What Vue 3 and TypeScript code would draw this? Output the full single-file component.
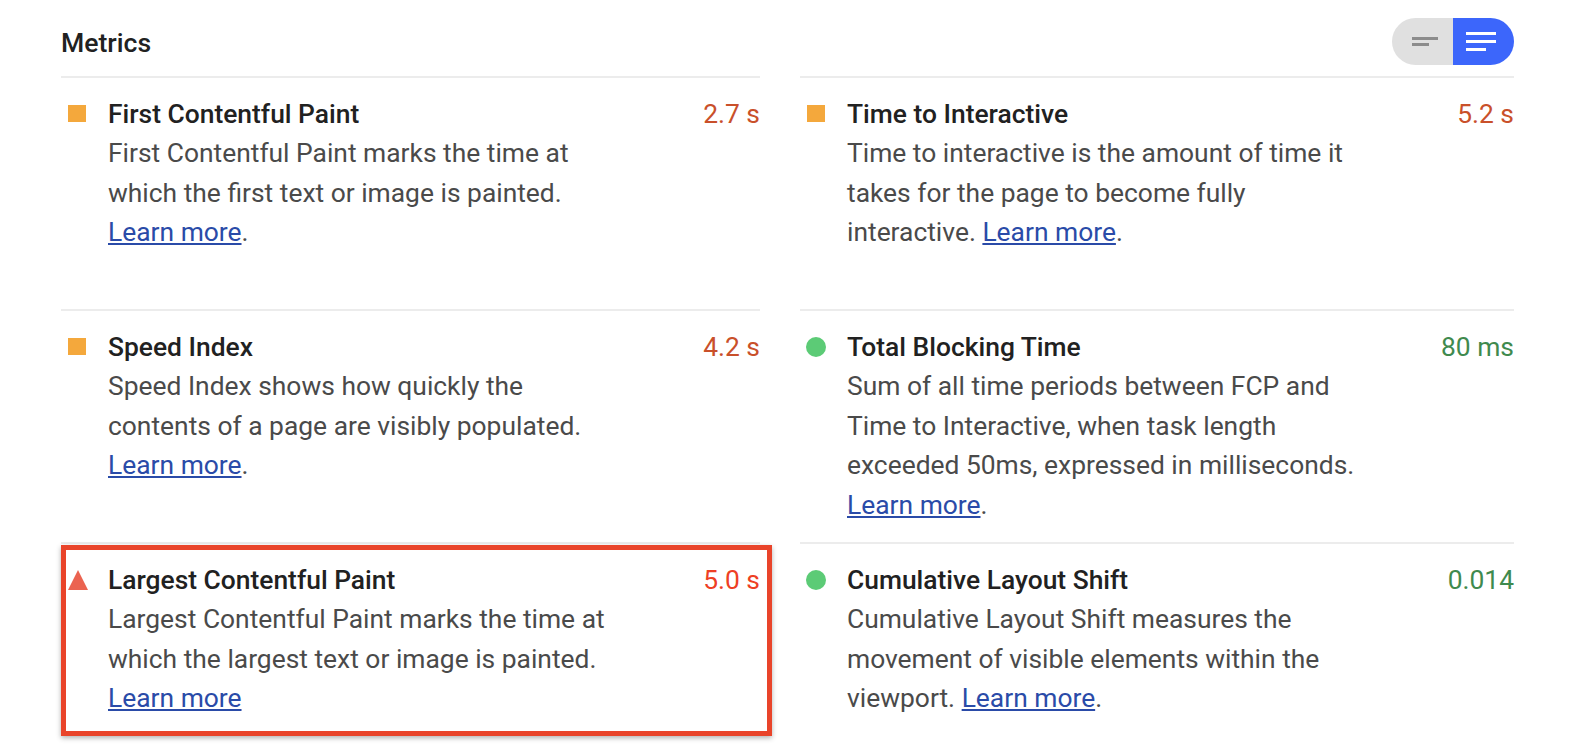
<script setup lang="ts">
interface Metric {
  title: string;
  value: string;
  rating: "average" | "pass" | "fail";
  before: string;
  after: string;
  highlight?: boolean;
}

const metrics: Metric[] = [
  {
    title: "First Contentful Paint",
    value: "2.7 s",
    rating: "average",
    before: "First Contentful Paint marks the time at which the first text or image is painted.",
    after: ".",
  },
  {
    title: "Time to Interactive",
    value: "5.2 s",
    rating: "average",
    before: "Time to interactive is the amount of time it takes for the page to become fully interactive.",
    after: ".",
  },
  {
    title: "Speed Index",
    value: "4.2 s",
    rating: "average",
    before: "Speed Index shows how quickly the contents of a page are visibly populated.",
    after: ".",
  },
  {
    title: "Total Blocking Time",
    value: "80 ms",
    rating: "pass",
    before: "Sum of all time periods between FCP and Time to Interactive, when task length exceeded 50ms, expressed in milliseconds.",
    after: ".",
  },
  {
    title: "Largest Contentful Paint",
    value: "5.0 s",
    rating: "fail",
    before: "Largest Contentful Paint marks the time at which the largest text or image is painted.",
    after: "",
    highlight: true,
  },
  {
    title: "Cumulative Layout Shift",
    value: "0.014",
    rating: "pass",
    before: "Cumulative Layout Shift measures the movement of visible elements within the viewport.",
    after: ".",
  },
];
</script>

<template>
  <div class="page">
    <header class="header">
      <h2 class="heading">Metrics</h2>
      <div class="toggle">
        <span class="toggle-side off">
          <i class="bar off-long"></i>
          <i class="bar off-short"></i>
        </span>
        <span class="toggle-side on">
          <i class="bar on-long"></i>
          <i class="bar on-long"></i>
          <i class="bar on-short"></i>
        </span>
      </div>
    </header>

    <div class="grid">
      <section v-for="m in metrics" :key="m.title" class="metric">
        <span class="icon" :class="m.rating"></span>
        <div class="body">
          <div class="top">
            <span class="title">{{ m.title }}</span>
            <span class="value" :class="m.rating">{{ m.value }}</span>
          </div>
          <p class="desc">{{ m.before }} <a class="link" href="#">Learn more</a>{{ m.after }}</p>
        </div>
        <div v-if="m.highlight" class="highlight"></div>
      </section>
    </div>
  </div>
</template>

<style>
html,
body {
  background: #fff;
}
</style>

<style scoped>
.page {
  width: 1578px;
  height: 754px;
  box-sizing: border-box;
  padding: 18px 64px 0 61px;
  overflow: hidden;
  font-family: Roboto, "Liberation Sans", sans-serif;
}

.header {
  display: flex;
  align-items: center;
  justify-content: space-between;
  height: 47px;
  margin-bottom: 11px;
}

.heading {
  margin: 0;
  font-size: 26.6px;
  font-weight: 500;
  color: #212121;
  position: relative;
  top: 1px;
}

.toggle {
  display: flex;
  width: 122px;
  height: 47px;
  border-radius: 24px;
  overflow: hidden;
}

.toggle-side {
  flex: none;
  width: 61px;
  display: flex;
  flex-direction: column;
  justify-content: center;
  box-sizing: border-box;
}

.toggle-side.off {
  background: #e0e0e0;
  padding-left: 20px;
  gap: 3px;
}

.toggle-side.on {
  background: #3c66fb;
  padding-left: 13px;
  gap: 5px;
}

.bar {
  display: block;
  height: 3px;
}

.off-long {
  width: 26px;
  background: #8c8c8c;
}

.off-short {
  width: 17px;
  background: #8c8c8c;
}

.on-long {
  width: 30px;
  background: #fff;
}

.on-short {
  width: 20px;
  background: #fff;
}

.grid {
  display: grid;
  grid-template-columns: 699px 714px;
  grid-auto-rows: 233px;
  column-gap: 40px;
}

.metric {
  position: relative;
  display: flex;
  border-top: 2px solid #ececec;
  box-sizing: border-box;
  padding: 16px 0 0 7px;
}

.icon {
  flex: none;
  width: 18px;
  height: 17px;
  margin-top: 11px;
  margin-right: 22px;
}

.icon.average {
  background: #f4a83c;
}

.icon.pass {
  width: 20px;
  height: 20px;
  margin-top: 10px;
  margin-left: -1px;
  margin-right: 21px;
  border-radius: 50%;
  background: #5ccb76;
}

.icon.fail {
  width: 20px;
  height: 20px;
  margin-top: 10px;
  margin-right: 20px;
  background: #eb6350;
  clip-path: polygon(50% 0, 100% 100%, 0 100%);
}

.body {
  flex: 1;
  min-width: 0;
}

.top {
  display: flex;
  justify-content: space-between;
  align-items: baseline;
  line-height: 40px;
  font-size: 26.4px;
}

.title {
  font-weight: 500;
  color: #212121;
}

.value.average {
  color: #c9502a;
}

.value.pass {
  color: #3f8a4e;
}

.value.fail {
  color: #ee3f24;
}

.desc {
  margin: 0;
  max-width: 512px;
  font-size: 26.4px;
  line-height: 39.6px;
  color: #4a4a4a;
}

.link {
  color: #2a4ba8;
  text-decoration: underline;
  white-space: nowrap;
}

.highlight {
  position: absolute;
  left: 0;
  top: 1px;
  width: 711px;
  height: 191px;
  box-sizing: border-box;
  border: 5px solid #e9442a;
  box-shadow: 0 2px 5px rgba(0, 0, 0, 0.3);
  pointer-events: none;
}
</style>
